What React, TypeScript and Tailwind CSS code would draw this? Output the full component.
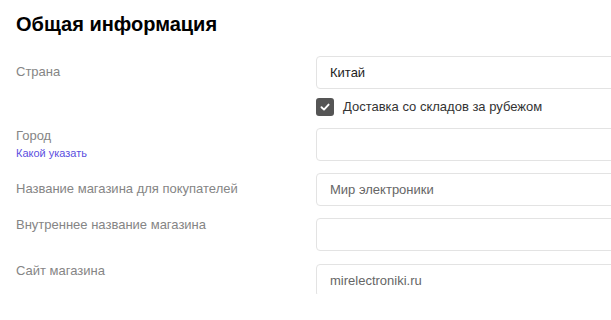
import React from "react";

const font = { fontFamily: '"Liberation Sans", Arial, sans-serif' };

function Field({ value, dark }: { value?: string; dark?: boolean }) {
  return (
    <div className="flex h-[33px] w-[320px] shrink-0 items-center rounded-[4px] border border-[#e3e3e3] bg-white pl-[13px]">
      <span className={dark ? "text-[13px] text-[#222]" : "text-[13px] text-[#666]"}>{value}</span>
    </div>
  );
}

function Label({ children, className }: { children: React.ReactNode; className?: string }) {
  return <div className={"text-[13px] leading-[16px] text-[#858585] " + (className ?? "")}>{children}</div>;
}

export default function App() {
  return (
    <div className="h-[320px] w-[611px] overflow-hidden bg-white" style={font}>
      <div className="h-[294px] overflow-hidden pl-[16px]">
        <h1 className="pt-[11px] text-[20px] font-bold leading-[26px] text-black">Общая информация</h1>

        <div className="mt-[19px] flex">
          <div className="w-[300px] shrink-0 pt-[8px]">
            <Label>Страна</Label>
          </div>
          <Field value="Китай" dark />
        </div>

        <div className="mt-[9px] flex">
          <div className="w-[300px] shrink-0" />
          <div className="flex items-center gap-[9px]">
            <div className="flex h-[18px] w-[18px] items-center justify-center rounded-[3px] bg-[#555]">
              <svg width="12" height="12" viewBox="0 0 12 12" fill="none">
                <path d="M2.5 6.2L5 8.6L9.6 3.6" stroke="white" strokeWidth="1.9" strokeLinecap="round" strokeLinejoin="round" />
              </svg>
            </div>
            <span className="text-[13px] leading-[18px] text-[#333]">Доставка со складов за рубежом</span>
          </div>
        </div>

        <div className="mt-[12px] flex">
          <div className="w-[300px] shrink-0">
            <Label>Город</Label>
            <div className="mt-[2px] text-[11px] leading-[14px] text-[#5b4fe0]">Какой указать</div>
          </div>
          <Field />
        </div>

        <div className="mt-[12px] flex">
          <div className="w-[300px] shrink-0 pt-[8px]">
            <Label>Название магазина для покупателей</Label>
          </div>
          <Field value="Мир электроники" />
        </div>

        <div className="mt-[12px] flex">
          <div className="w-[300px] shrink-0">
            <Label className="-mt-[1px]">Внутреннее название магазина</Label>
          </div>
          <Field />
        </div>

        <div className="mt-[13px] flex">
          <div className="w-[300px] shrink-0">
            <Label className="-mt-[1px]">Сайт магазина</Label>
          </div>
          <Field value="mirelectroniki.ru" />
        </div>
      </div>
    </div>
  );
}
